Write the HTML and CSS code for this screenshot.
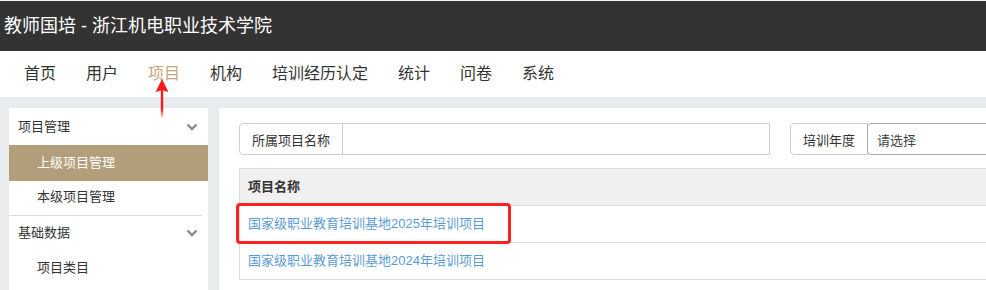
FILE: index.html
```html
<!DOCTYPE html>
<html lang="zh-CN">
<head>
    <meta charset="UTF-8">
    <title>教师国培 - 浙江机电职业技术学院</title>
    <link rel="stylesheet" href="styles.css">
</head>
<body>

    <div class="topbar">教师国培 - 浙江机电职业技术学院</div>

    <div class="nav">
        <a class="nav-item">首页</a>
        <a class="nav-item">用户</a>
        <a class="nav-item active">项目
            <!-- 标注箭头 -->
            <svg class="arrow" width="16" height="40" viewBox="0 0 16 40">
                <defs>
                    <linearGradient id="fade" x1="0" y1="0" x2="0" y2="1">
                        <stop offset="0" stop-color="#ff1a1a"/>
                        <stop offset="0.75" stop-color="#ff1a1a"/>
                        <stop offset="1" stop-color="#ff1a1a" stop-opacity="0"/>
                    </linearGradient>
                </defs>
                <path d="M8 0 L14.5 13 L9.2 11.5 L9.2 40 L6.8 40 L6.8 11.5 L1.5 13 Z" fill="url(#fade)"/>
            </svg>
        </a>
        <a class="nav-item">机构</a>
        <a class="nav-item">培训经历认定</a>
        <a class="nav-item">统计</a>
        <a class="nav-item">问卷</a>
        <a class="nav-item">系统</a>
    </div>

    <div class="main">
        <div class="sidebar">
            <div class="group">
                <div class="group-title">项目管理
                    <svg class="chevron" width="12" height="8" viewBox="0 0 12 8"><path d="M1.5 1.5 L6 6 L10.5 1.5" fill="none" stroke="#8a8a8a" stroke-width="2.4"/></svg>
                </div>
                <div class="sub-item active">上级项目管理</div>
                <div class="sub-item">本级项目管理</div>
            </div>
            <div class="group">
                <div class="group-title">基础数据
                    <svg class="chevron" width="12" height="8" viewBox="0 0 12 8"><path d="M1.5 1.5 L6 6 L10.5 1.5" fill="none" stroke="#8a8a8a" stroke-width="2.4"/></svg>
                </div>
                <div class="sub-item">项目类目</div>
            </div>
        </div>

        <div class="content">
            <div class="search">
                <div class="input-group">
                    <span class="addon">所属项目名称</span>
                    <input class="field" type="text">
                </div>
                <div class="input-group">
                    <span class="addon">培训年度</span>
                    <div class="select">请选择</div>
                </div>
            </div>

            <table class="list">
                <thead>
                    <tr><th>项目名称</th></tr>
                </thead>
                <tbody>
                    <tr><td class="marked"><a>国家级职业教育培训基地2025年培训项目</a><span class="highlight"></span></td></tr>
                    <tr><td><a>国家级职业教育培训基地2024年培训项目</a></td></tr>
                </tbody>
            </table>
        </div>
    </div>

</body>
</html>
```

FILE: styles.css
```css
body {
    margin: 0;
    background: #e9ecef;
    font-family: "Liberation Sans", "Noto Sans CJK SC", sans-serif;
    color: #333;
    overflow: hidden;
    height: 290px;
}

.topbar {
    height: 50px;
    line-height: 50px;
    border-top: 1px solid #f4f4f4;
    background: #333333;
    color: #fff;
    font-size: 18px;
    padding-left: 4px;
}

.nav {
    display: flex;
    height: 46px;
    background: #fff;
    padding-left: 9px;
}

.nav-item {
    position: relative;
    padding: 0 15px;
    line-height: 45px;
    font-size: 16px;
    color: #333;
}

.nav-item.active {
    color: #c4a67c;
}

.arrow {
    position: absolute;
    left: 21px;
    top: 28px;
}

.main {
    display: flex;
    gap: 11px;
    height: 182px;
    padding: 11px 0 0 9px;
}

.sidebar {
    width: 199px;
    flex-shrink: 0;
    background: #fff;
}

.group + .group {
    border-top: 1px solid #dcdcdc;
    margin-right: 6px;
}

.group-title {
    box-sizing: border-box;
    display: flex;
    align-items: center;
    justify-content: space-between;
    height: 37px;
    padding: 0 10px 3px 9px;
    font-size: 13px;
}

.group-title .chevron {
    margin-top: 3px;
}

.group + .group .group-title {
    height: 34px;
    margin-right: -6px;
}

.sub-item {
    height: 36px;
    line-height: 36px;
    padding-left: 28px;
    font-size: 13px;
}

.group:first-child .sub-item:last-child {
    height: 34px;
    line-height: 32px;
}

.sub-item.active {
    background: #b29e7a;
    color: #fff;
}

.content {
    flex: 1;
    min-width: 0;
    background: #fff;
    padding: 15px 0 0 20px;
    overflow: hidden;
}

.search {
    display: flex;
    gap: 20px;
}

.input-group {
    display: flex;
    flex-shrink: 0;
    height: 32px;
}

.addon {
    display: flex;
    align-items: center;
    padding: 0 12px;
    border: 1px solid #cfcfcf;
    border-radius: 4px 0 0 4px;
    background: #fff;
    font-size: 13px;
    color: #333;
    white-space: nowrap;
}

.field {
    width: 426px;
    margin: 0;
    border: 1px solid #cfcfcf;
    border-left: none;
    padding: 0;
}

.select {
    width: 200px;
    display: flex;
    align-items: center;
    padding-left: 9px;
    border: 1px solid #aaa;
    border-radius: 4px;
    font-size: 13px;
    color: #444;
    margin-left: -1px;
}

.list {
    margin-top: 13px;
    width: 100%;
    border-collapse: collapse;
    font-size: 13px;
}

.list th {
    height: 33px;
    text-align: left;
    padding: 0 8px 3px;
    background: #f0f0f0;
    border: 1px solid #dcdcdc;
    border-right: none;
    font-weight: bold;
    color: #333;
}

.list td {
    height: 33px;
    padding: 0 8px 3px;
    border: 1px solid #dcdcdc;
    border-right: none;
}

.list a {
    color: #5b9bd5;
}

.marked {
    position: relative;
}

.highlight {
    position: absolute;
    left: -4px;
    top: -3px;
    width: 269px;
    height: 35px;
    border: 3px solid #ff2020;
    border-radius: 4px;
}
```
